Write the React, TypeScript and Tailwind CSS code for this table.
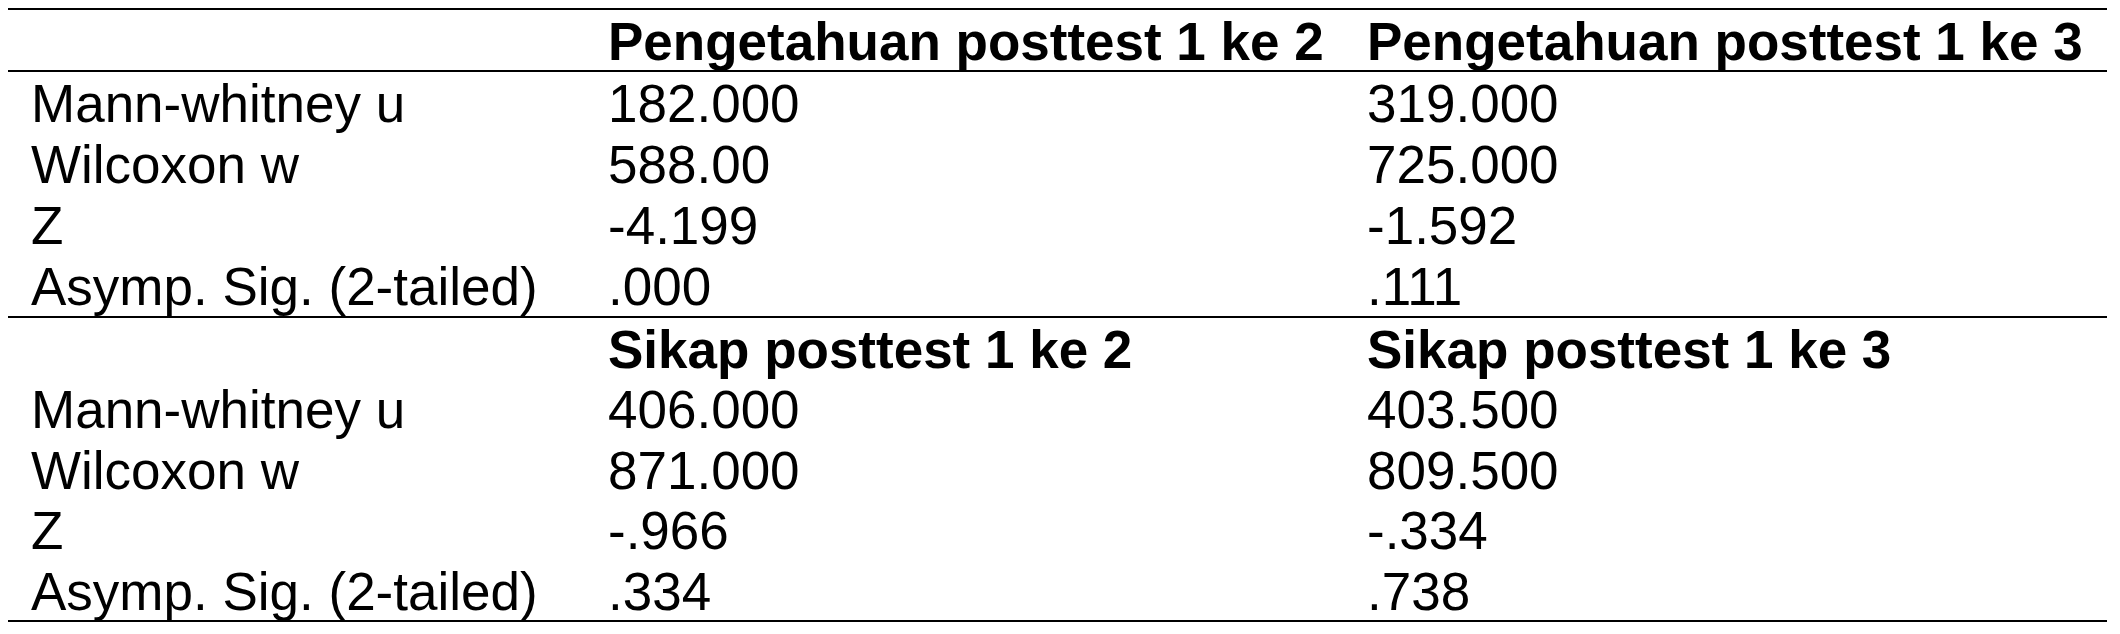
const sections = [
  {
    titles: ["Pengetahuan posttest 1 ke 2", "Pengetahuan posttest 1 ke 3"],
    rows: [
      ["Mann-whitney u", "182.000", "319.000"],
      ["Wilcoxon w", "588.00", "725.000"],
      ["Z", "-4.199", "-1.592"],
      ["Asymp. Sig. (2-tailed)", ".000", ".111"],
    ],
  },
  {
    titles: ["Sikap posttest 1 ke 2", "Sikap posttest 1 ke 3"],
    rows: [
      ["Mann-whitney u", "406.000", "403.500"],
      ["Wilcoxon w", "871.000", "809.500"],
      ["Z", "-.966", "-.334"],
      ["Asymp. Sig. (2-tailed)", ".334", ".738"],
    ],
  },
];

function Row({ cells, bold, tall }: { cells: string[]; bold?: boolean; tall?: boolean }) {
  return (
    <div
      className={`grid grid-cols-[600px_759px_1fr] pt-[3px] leading-[58px] whitespace-nowrap ${
        tall ? "h-[61px]" : "h-[60.5px]"
      } ${bold ? "font-bold" : ""}`}
    >
      <div className="pl-[23px]">{cells[0]}</div>
      <div>{cells[1]}</div>
      <div>{cells[2]}</div>
    </div>
  );
}

export default function App() {
  return (
    <div className="min-h-screen bg-white pl-2 pt-2 text-black">
      <div
        className="w-[2099px] border-y-2 border-black text-[53px]"
        style={{ fontFamily: '"Liberation Sans", Arial, sans-serif' }}
      >
        {/* first block */}
        <div className="border-b-2 border-black">
          <div className="h-[60px]">
            <Row cells={["", ...sections[0].titles]} bold tall />
          </div>
        </div>
        <div className="border-b-2 border-black">
          {sections[0].rows.map((r) => (
            <Row key={r[0]} cells={r} tall />
          ))}
        </div>

        {/* second block */}
        <div className="h-[60px]">
          <Row cells={["", ...sections[1].titles]} bold tall />
        </div>
        {sections[1].rows.map((r) => (
          <Row key={r[0]} cells={r} />
        ))}
      </div>
    </div>
  );
}
